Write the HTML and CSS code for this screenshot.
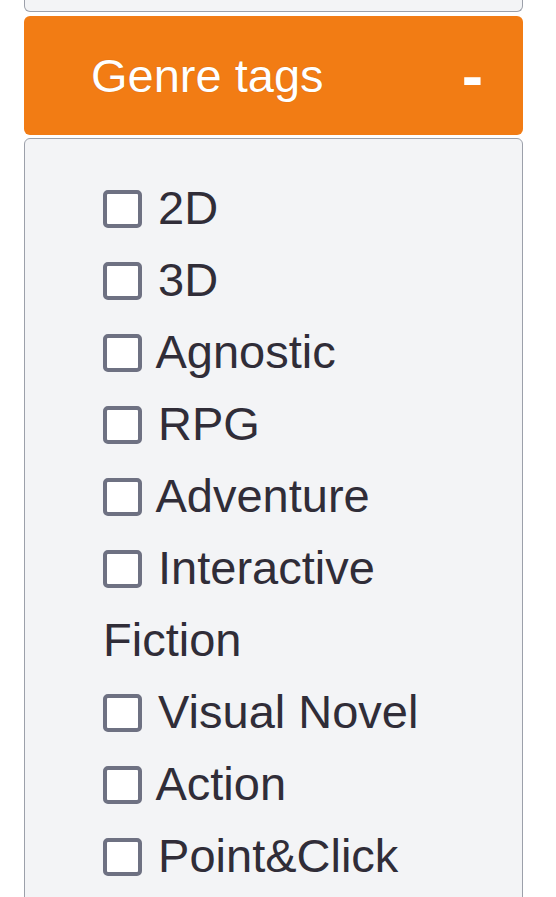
FILE: index.html
```html
<!DOCTYPE html>
<html>
    <head>
        <title>Genre tags</title>
        <link rel="stylesheet" href="styles.css">
    </head>
    <body>
        <div class="panel-prev"></div>

        <div class="filter-head">
            <span class="filter-title">Genre tags</span>
            <span class="filter-toggle">-</span>
        </div>

        <div class="filter-body">
            <label class="tag"><input type="checkbox" class="tag-box"> 2D</label>
            <label class="tag"><input type="checkbox" class="tag-box"> 3D</label>
            <label class="tag"><input type="checkbox" class="tag-box"> Agnostic</label>
            <label class="tag"><input type="checkbox" class="tag-box"> RPG</label>
            <label class="tag"><input type="checkbox" class="tag-box"> Adventure</label>
            <label class="tag"><input type="checkbox" class="tag-box"> Interactive Fiction</label>
            <label class="tag"><input type="checkbox" class="tag-box"> Visual Novel</label>
            <label class="tag"><input type="checkbox" class="tag-box"> Action</label>
            <label class="tag"><input type="checkbox" class="tag-box"> Point&amp;Click</label>
        </div>
    </body>
</html>
```

FILE: styles.css
```css
body {
    margin: 0;
    background: #fff;
    font-family: "Liberation Sans", Arial, sans-serif;
}

.panel-prev {
    margin: 0 33px 0 24px;
    height: 11px;
    background: #f3f4f6;
    border: 1px solid #9ca0aa;
    border-top: none;
    border-radius: 0 0 6px 6px;
}

.filter-head {
    margin: 4px 33px 0 24px;
    height: 119px;
    background: #f27c14;
    border-radius: 6px;
    display: flex;
    align-items: center;
    justify-content: space-between;
    padding: 0 40px 0 67px;
    color: #fff;
}

.filter-title {
    font-size: 47px;
    text-shadow: 0 0 1px rgba(120, 60, 0, 0.4);
}

.filter-toggle {
    font-size: 64px;
    font-weight: bold;
}

.filter-body {
    margin: 3px 33px 0 24px;
    height: 760px;
    background: #f3f4f6;
    border: 1px solid #9ca0aa;
    border-radius: 6px;
    padding: 33px 70px 0 78px;
    color: #302d38;
    font-size: 47px;
    line-height: 72px;
}

.tag {
    display: block;
}

.tag-box {
    appearance: none;
    -webkit-appearance: none;
    box-sizing: border-box;
    width: 39px;
    height: 38px;
    margin: 0 3px 0 0;
    background: #fff;
    border: 4px solid #6e7182;
    border-radius: 5px;
    vertical-align: -4px;
}
```
